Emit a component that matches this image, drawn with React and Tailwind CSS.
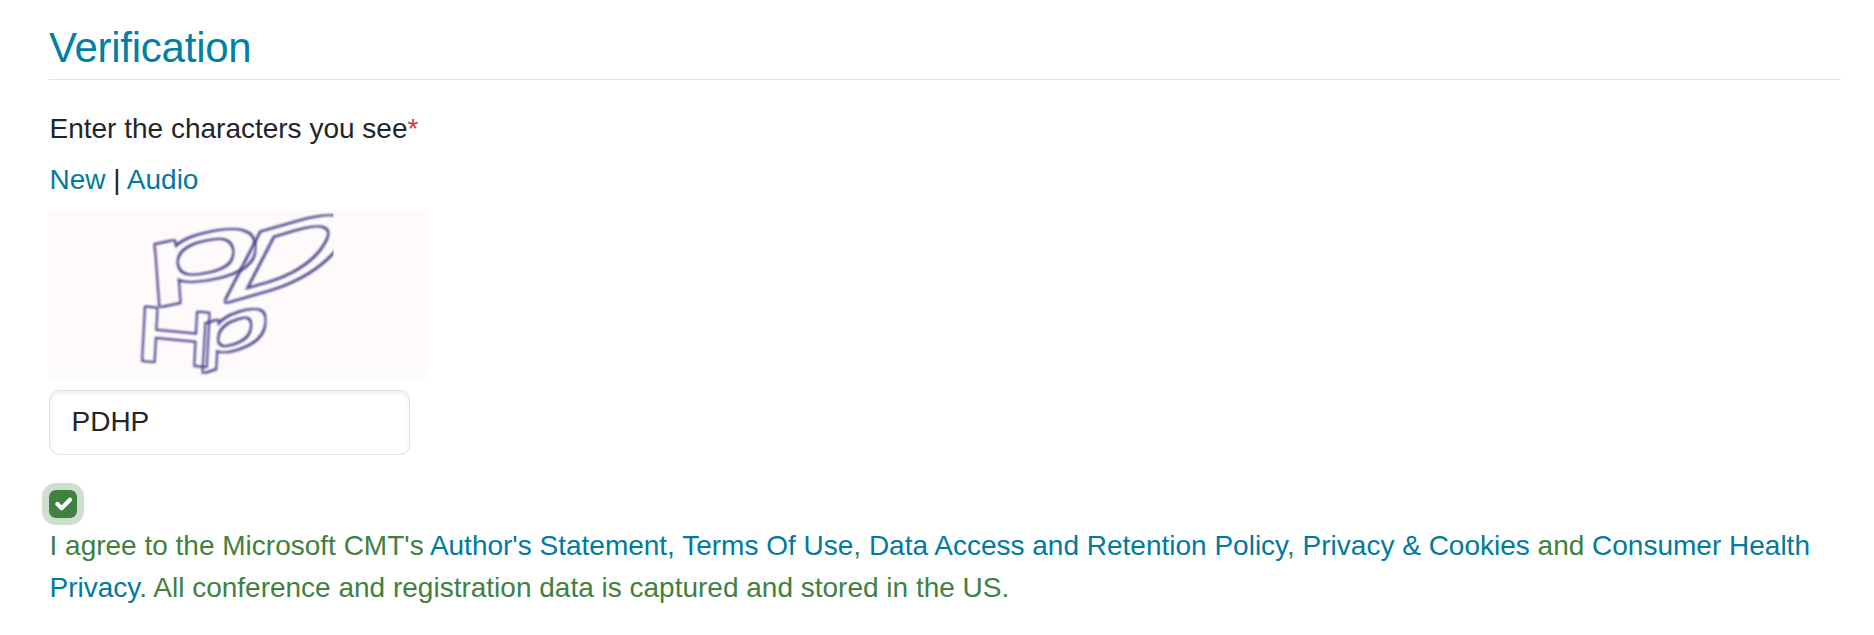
import React, { useState } from "react";

const link = "text-[#007a9e] hover:underline";

// Outlined, distorted characters on a pale background
const CaptchaImage = () => {
  return (
    <svg
      width="378"
      height="168"
      viewBox="0 0 378 168"
      className="block bg-[#fffafa]"
      role="img"
      aria-label="captcha"
    >
      <defs>
        <clipPath id="captcha-edge">
          <rect x="0" y="0" width="284.5" height="168" />
        </clipPath>
        {/* Turns a filled character into an even, soft outline */}
        <filter id="outline" filterUnits="userSpaceOnUse" x="0" y="0" width="378" height="168" colorInterpolationFilters="sRGB">
          <feMorphology in="SourceGraphic" operator="dilate" radius="1.5" result="fat" />
          <feComposite in="fat" in2="SourceGraphic" operator="out" result="ring" />
          <feGaussianBlur in="ring" stdDeviation="0.8" />
        </filter>
      </defs>
      <g
        clipPath="url(#captcha-edge)"
        fill="#4a4690"
        fontFamily="Liberation Sans, sans-serif"
        fontSize="100"
      >
        <g filter="url(#outline)">
          <text transform="matrix(2.17 -0.46 0.06 0.83 95.4 82)">p</text>
        </g>
        <g filter="url(#outline)">
          <text transform="matrix(1.66 -0.48 -0.52 1.01 163 96)">D</text>
        </g>
        <g filter="url(#outline)">
          <text transform="matrix(1.12 0.11 -0.04 0.76 85 149)">H</text>
        </g>
        <g filter="url(#outline)">
          <text transform="matrix(1.32 -0.43 -0.04 0.65 146.5 151.4)">p</text>
        </g>
      </g>
    </svg>
  );
};

const App = () => {
  const [code, setCode] = useState("PDHP");
  const [agreed, setAgreed] = useState(true);

  return (
    <div className="h-[635px] overflow-hidden bg-white pl-[49px] pr-[33px] pt-[23px] font-['Liberation_Sans',Arial,sans-serif] text-[28px] leading-[42px] text-[#212529]">
      <h2 className="h-[57px] border-b border-[#dee2e6] text-[42px] leading-[50px] tracking-[-0.25px] text-[#0080a6]">
        Verification
      </h2>

      {/* Captcha */}
      <div className="mt-7">
        <label htmlFor="code" className="block pl-[0.5px]">
          Enter the characters you see<span className="text-[#dc3545]">*</span>
        </label>
        <div className="mt-[9px] mb-[9px] pl-[0.5px]">
          <a href="#" className={link}>New</a> | <a href="#" className={link}>Audio</a>
        </div>
        <CaptchaImage />
        <input
          id="code"
          type="text"
          value={code}
          onChange={(e) => setCode(e.target.value)}
          className="mt-3 block h-[65px] w-[361px] rounded-[10px] border border-[#dee2e6] px-[21.5px] pb-px shadow-[inset_0_2px_4px_rgba(0,0,0,0.075)] outline-none"
        />
      </div>

      {/* Agreement */}
      <button
        type="button"
        role="checkbox"
        aria-checked={agreed}
        aria-label="I agree"
        onClick={() => setAgreed(!agreed)}
        className="mt-[35px] block h-7 w-7 rounded-[7px] bg-[#408140] shadow-[0_0_0_7px_rgba(64,129,64,0.25)]"
      >
        {agreed && (
          <svg viewBox="0 0 20 20" className="h-7 w-7" fill="none" stroke="#fff" strokeWidth="3" strokeLinecap="round" strokeLinejoin="round">
            <path d="m6 10 3 3 6-6" />
          </svg>
        )}
      </button>
      <p className="mt-[7px] pl-[0.5px] text-[#408140]">
        I agree to the Microsoft CMT's{" "}
        <a href="#" className={link}>Author's Statement,</a>{" "}
        <a href="#" className={link}>Terms Of Use</a>,{" "}
        <a href="#" className={link}>Data Access and Retention Policy</a>,{" "}
        <a href="#" className={link}>Privacy &amp; Cookies</a> and{" "}
        <a href="#" className={link}>Consumer Health Privacy</a>. All conference
        and registration data is captured and stored in the US.
      </p>
    </div>
  );
};

export default App;
